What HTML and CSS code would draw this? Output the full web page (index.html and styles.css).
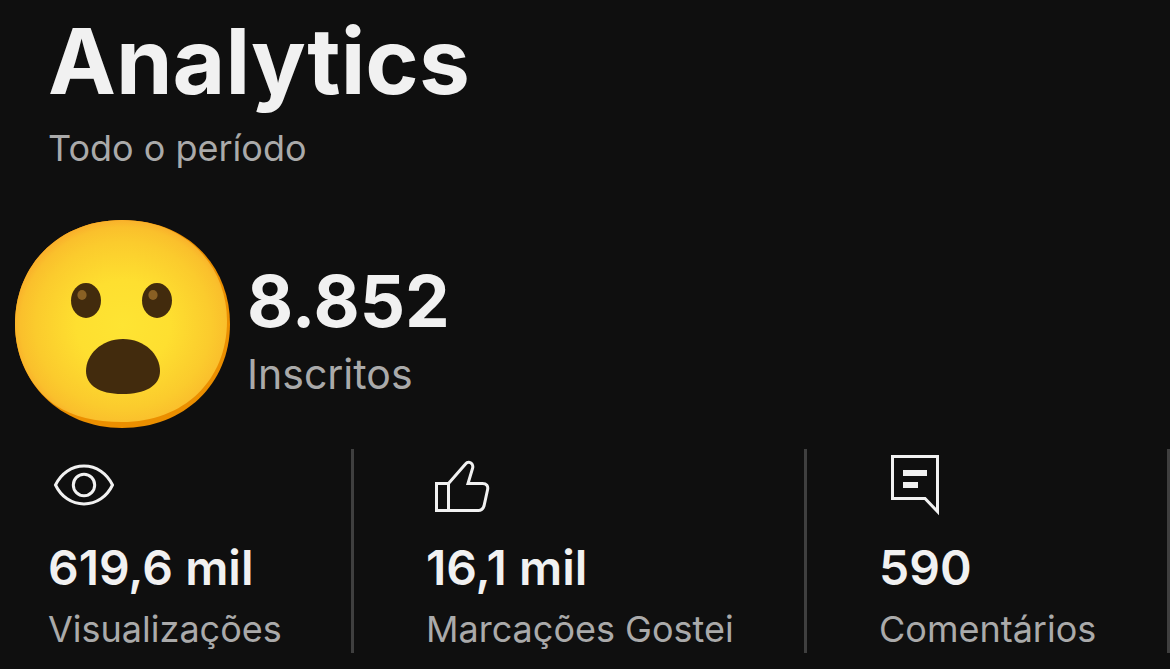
FILE: index.html
```html
<!DOCTYPE html>
<html lang="pt-BR">
<head>
  <meta charset="utf-8">
  <meta name="viewport" content="width=device-width, initial-scale=1">
  <title>Analytics</title>
  <link rel="stylesheet" href="styles.css">
</head>
<body>
  <main class="page">
    <header class="header">
      <h1 class="title">Analytics</h1>
      <p class="label">Todo o período</p>
    </header>

    <section class="subscribers">
      <svg class="emoji" viewBox="0 0 216 208" aria-hidden="true">
        <defs>
          <radialGradient id="face" cx="0.51" cy="0.52" r="0.55">
            <stop offset="0" stop-color="#fee433"/>
            <stop offset="0.4" stop-color="#fedf30"/>
            <stop offset="0.75" stop-color="#fbcb2d"/>
            <stop offset="0.88" stop-color="#fac02c"/>
            <stop offset="1" stop-color="#f8a42a"/>
          </radialGradient>
        </defs>
        <path fill="#eb8f00" d="M107 0C174 0 215 47 215 104C215 164 169 208 107 208C45 208 0 162 0 104C0 45 44 0 107 0Z"/>
        <path fill="url(#face)" d="M107 0C170 0 212 45 212 101C212 160 169 202 107 202C80 202 59 197 40 185C15 167 0 137 0 104C0 45 44 0 107 0Z"/>
        <g fill="#422b0d">
          <ellipse cx="71" cy="80.500" rx="15" ry="17.500"/>
          <ellipse cx="142" cy="80.500" rx="15" ry="17.500"/>
          <path d="M108 119C130 119 145 135 145 151C145 166 130 174 107 174C84 174 71 165 71 151C71 135 86 119 108 119Z"/>
        </g>
        <g fill="#896024">
          <ellipse cx="67" cy="75" rx="4.600" ry="5"/>
          <ellipse cx="138" cy="75" rx="4.600" ry="5"/>
        </g>
      </svg>
      <div class="subscribers-text">
        <p class="total">8.852</p>
        <p class="total-label">Inscritos</p>
      </div>
    </section>

    <section class="stats">
      <article class="stat">
        <svg class="icon" viewBox="0 0 72 72" aria-hidden="true">
          <path d="M7.500 36C13 24.500 23.500 17 36 17S59 24.500 64.500 36C59 47.500 48.500 55 36 55S13 47.500 7.500 36Z"/>
          <circle cx="36" cy="36" r="10.700"/>
        </svg>
        <p class="value">619,6 mil</p>
        <p class="label">Visualizações</p>
      </article>
      <article class="stat">
        <svg class="icon" viewBox="0 0 72 72" aria-hidden="true">
          <path d="M10.500 34.500H22.500L39.500 15C41.500 12.500 44.500 13 46 15C47 16.500 47 18 46.500 19.500L42 34.500H56.500C60.500 34.500 62.500 37 61.500 41L58 57C57 60 55.500 61.500 52.500 61.500H10.500ZM22.500 34.500V61.500"/>
        </svg>
        <p class="value">16,1 mil</p>
        <p class="label">Marcações Gostei</p>
      </article>
      <article class="stat">
        <svg class="icon" viewBox="0 0 72 72" aria-hidden="true">
          <path d="M13.500 7.500H58.500V62.500L46 49.500H13.500Z"/>
          <path class="solid" d="M24 21H48V27H24ZM24 33H39V39H24Z"/>
        </svg>
        <p class="value">590</p>
        <p class="label">Comentários</p>
      </article>
    </section>
  </main>
</body>
</html>
```
FILE: styles.css
```css
* {
  box-sizing: border-box;
}

body {
  margin: 0;
  background: #0f0f0f;
  color: #f1f1f1;
  font-family: Inter, "Liberation Sans", sans-serif;
}

h1,
p {
  margin: 0;
}

.page {
  padding: 14px 0 16px;
}

.header {
  display: grid;
  gap: 18px;
  padding: 0 48px;
}

.title {
  font-size: 91px;
  font-weight: 700;
  line-height: 94px;
}

.label {
  color: #aaa;
  font-size: 36px;
  line-height: 44px;
  white-space: nowrap;
}

.subscribers {
  display: flex;
  align-items: center;
  gap: 16px;
  margin-top: 50px;
  padding: 0 15px;
}

.emoji {
  width: 216px;
  height: 208px;
}

.subscribers-text {
  display: grid;
  gap: 13px;
  padding-top: 17px;
}

.total {
  font-size: 71px;
  font-weight: 700;
  line-height: 70px;
}

.total-label {
  color: #aaa;
  font-size: 41px;
  line-height: 50px;
}

.stats {
  display: grid;
  grid-template-columns: 354fr 453fr 363fr;
  margin-top: 21px;
}

.stat {
  min-width: 0;
  padding: 0 0 2px 72px;
  border-right: 3px solid #3f3f3f;
}

.stat:first-child {
  padding-left: 48px;
}

.icon {
  display: block;
  width: 72px;
  height: 72px;
  margin-bottom: 18px;
  fill: none;
  stroke: #f1f1f1;
  stroke-width: 3;
}

.icon .solid {
  fill: #f1f1f1;
  stroke: none;
}

.value {
  margin-bottom: 10px;
  font-size: 48px;
  font-weight: 600;
  line-height: 58px;
  white-space: nowrap;
}
```
